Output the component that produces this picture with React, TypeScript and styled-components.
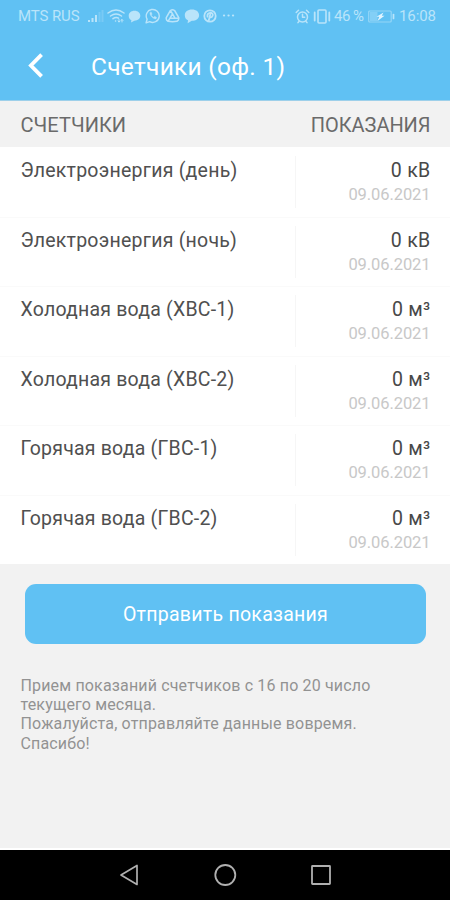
import React from 'react';
import styled, { createGlobalStyle } from 'styled-components';

const Global = createGlobalStyle`
  * { box-sizing: border-box; }
  body { margin: 0; background: #f2f2f2; font-family: Roboto, "Noto Sans", sans-serif; }
`;
const Screen = styled.main`
  width: 450px; height: 900px; display: flex; flex-direction: column;
  background: #f2f2f2; overflow: hidden;
`;
const Header = styled.header`
  height: 101px; flex: none; background: #60c1f3; color: #fff;
  border-bottom: 1px solid #9ed0ea;
`;
const StatusBar = styled.div`
  height: 32px; display: flex; justify-content: space-between; align-items: center;
  padding: 0 14px 0 18px; color: #b9e4fa; font-size: 15px; line-height: 32px;
`;
const StatusGroup = styled.div`display: flex; align-items: center; white-space: pre;`;
const StatusText = styled.span<{ $w: number; $ls?: number; $gap?: number }>`
  width: ${p => p.$w}px; letter-spacing: ${p => p.$ls ?? 0}px; margin-left: ${p => p.$gap ?? 0}px;
`;
const Glyph = styled.svg<{ $gap?: number }>`
  display: block; flex: none; margin-left: ${p => p.$gap ?? 0}px;
  fill: none; stroke: currentColor; stroke-linecap: round; stroke-linejoin: round;
`;
const TitleBar = styled.div`height: 68px; display: flex; align-items: center; padding-left: 26px;`;
const BackButton = styled.button`
  width: 65px; height: 40px; padding: 0; border: 0; background: none; color: #fff;
  display: flex; align-items: center;
`;
const Title = styled.h1`
  margin: 0; font-size: 24.5px; line-height: 32px; font-weight: 400; letter-spacing: .28px; padding-top: 2px;
`;
const TableHead = styled.div`
  height: 46px; flex: none; display: flex; justify-content: space-between; align-items: center;
  padding: 2px 19.5px 0 20.5px; font-size: 20px; color: #6a6a6a;
`;
const HeadLabel = styled.span<{ $ls: number }>`letter-spacing: ${p => p.$ls}px;`;
const Meters = styled.div`flex: none; background: #fff;`;
const Row = styled.div`
  height: 69.5px; display: flex; justify-content: space-between; padding: 9px 19.5px 0 20.5px;
  & + & { box-shadow: inset 0 1px #fafafa; }
`;
const MeterName = styled.div<{ $ls: number }>`
  font-size: 19.5px; line-height: 29px; color: #505050; letter-spacing: ${p => p.$ls}px;
`;
const Reading = styled.div`
  width: 135.5px; height: 52px; border-left: 1px solid #f6f6f6; text-align: right;
`;
const Value = styled.div`font-size: 19.5px; line-height: 29px; color: #484848; letter-spacing: .3px;`;
const DateText = styled.div`font-size: 16.5px; line-height: 20.5px; color: #c8c8c8; letter-spacing: -.08px;`;
const Submit = styled.button`
  flex: none; width: 401px; height: 60px; margin: 20px 0 0 25px; padding: 0; border: 0; border-radius: 11px;
  background: #60c1f3; color: #fff; font: 400 19.5px Roboto, sans-serif; letter-spacing: .27px;
`;
const Note = styled.p`
  margin: 32px 20px 0 20.5px; font-size: 16px; line-height: 19.2px; color: #929292; letter-spacing: .16px;
`;
const NoteLine = styled.span`display: block; white-space: nowrap;`;
const NavBar = styled.nav`
  height: 52px; flex: none; margin-top: auto; background: #000; color: #b0b0b0;
  border-top: 2px solid #fff; display: flex; align-items: center; padding-left: 118px; gap: 73px;
`;

const meters = [
  ['Электроэнергия (день)', '0 кВ', .24],
  ['Электроэнергия (ночь)', '0 кВ', .24],
  ['Холодная вода (ХВС-1)', '0 м³', .21],
  ['Холодная вода (ХВС-2)', '0 м³', .21],
  ['Горячая вода (ГВС-1)', '0 м³', .21],
  ['Горячая вода (ГВС-2)', '0 м³', .21],
] as const;

const StatusIcons = () => (
  <>
    <Glyph width="17" height="14" viewBox="0 0 17 14" strokeWidth="2">
      <path d="M2 13v-2M5.5 13v-4M9 13V6" strokeLinecap="butt" />
      <path d="M12.5 13V3M15.5 13V1" strokeLinecap="butt" opacity=".28" />
    </Glyph>
    <Glyph $gap={3} width="18" height="16" viewBox="0 0 18 16" strokeWidth="1.5">
      <path d="M1 5Q9-1 17 5M3.5 8Q9 4 14.5 8M6 10.7q3-2.2 5.5-.5M8.5 13h.1" />
      <path d="M12 11.5v2.5m-1-1 1 1 1-1M15 14v-2.5m-1 1 1-1 1 1" strokeWidth="1" />
    </Glyph>
    <Glyph $gap={3} width="13" height="13" viewBox="0 0 13 13">
      <path d="M6.5.7C3 .7.7 2.9.7 5.8c0 2 1 3.6 2.7 4.4L3 12.5l3.4-1.8c3.5 0 5.9-2 5.9-4.9S10 .7 6.5.7Z" fill="currentColor" stroke="none" />
    </Glyph>
    <Glyph $gap={4} width="16" height="16" viewBox="0 0 16 16" strokeWidth="1.4">
      <path d="m1.1 14.8 1-3.6a6.5 6.5 0 1 1 2.6 2.5Z" />
      <path d="M5 4.5c-.8 2.5 3 6.7 6 6.4l.6-1.6-2-1-1 .9C7.4 8.7 6.7 8 6.3 7l.8-.8-.8-1.9Z" fill="currentColor" strokeWidth=".4" />
    </Glyph>
    <Glyph $gap={4} width="15" height="14" viewBox="0 0 15 14" strokeWidth="1.5">
      <path d="M5.4 1.5q2.1-1.4 4.2 0l4 6.8q.8 2.5-1.6 4-4.5.9-9 0-2.4-1.5-1.6-4ZM7.5 4.8 5 9.2h5ZM5.4 1.8l2.1 3M13.5 9.2H10M3 12.3l2-3.1" />
    </Glyph>
    <Glyph $gap={4} width="16" height="15" viewBox="0 0 16 15">
      <path d="M8 .5C3.6.5.8 2.8.8 6.2c0 2.6 1.3 4.2 3.2 5.1l-.4 3 4.2-2.5c4.4 0 7.3-2.3 7.3-5.6S12.3.5 8 .5Z" fill="currentColor" stroke="none" />
    </Glyph>
    <Glyph $gap={3} width="14" height="14" viewBox="0 0 14 14" strokeWidth="1.8">
      <circle cx="7" cy="7" r="5.7" />
      <path d="M4.5 7.7C3.4 2.7 10.8 2.6 9.7 6.6c-.7 2.5-3.2 2-3 .3M7.3 5.5 5.6 12" />
    </Glyph>
    <Glyph $gap={5} width="13" height="4" viewBox="0 0 13 4">
      <path d="M2 1.5h.1M6.5 1.5h.1M11 1.5h.1" strokeWidth="2.2" />
    </Glyph>
  </>
);

export default function App() {
  return (
    <Screen>
      <Global />
      <Header>
        <StatusBar>
          <StatusGroup><StatusText $w={69} $ls={-.1}>MTS RUS</StatusText><StatusIcons /></StatusGroup>
          <StatusGroup>
            <Glyph width="15" height="15" viewBox="0 0 15 15" strokeWidth="1.5">
              <circle cx="7.5" cy="8" r="5" /><path d="M7.5 5.3v2.9H9.7M1.2 3.5 3.5 1.2M11.5 1.2l2.3 2.3M4 12.5l-1 1.1M11 12.5l1 1.1" />
            </Glyph>
            <Glyph $gap={3} width="18" height="15" viewBox="0 0 18 15" strokeWidth="1.6">
              <rect x="5" y="1" width="8" height="13" rx="1" /><path d="M1.7 3.5v8M16.3 3.5v8" strokeWidth="1.8" />
            </Glyph>
            <StatusText $gap={3} $w={34} $ls={-.5}>46 %</StatusText>
            <Glyph width="27" height="13" viewBox="0 0 27 13" strokeWidth="1.2">
              <rect x=".7" y="1" width="22.5" height="11" rx="1" opacity=".6" />
              <path d="M2 2h7.5v9H2z" fill="currentColor" stroke="none" opacity=".4" />
              <path d="m15.5 2.5-7 4.2h2.8L9.5 11l7-5.3h-2.7Z" fill="#e0f4ff" stroke="none" />
              <path d="M25.5 4.5v4" strokeWidth="1.7" />
            </Glyph>
            <StatusText $gap={4} $w={37} $ls={-.1}>16:08</StatusText>
          </StatusGroup>
        </StatusBar>
        <TitleBar>
          <BackButton aria-label="Назад">
            <Glyph width="20" height="28" viewBox="0 0 20 28" strokeWidth="3.8">
              <path d="M15.6 2.7 4.9 13.5l10.7 10.8" strokeLinecap="butt" strokeLinejoin="miter" />
            </Glyph>
          </BackButton>
          <Title>Счетчики (оф. 1)</Title>
        </TitleBar>
      </Header>
      <TableHead><HeadLabel $ls={.05}>СЧЕТЧИКИ</HeadLabel><HeadLabel $ls={-.05}>ПОКАЗАНИЯ</HeadLabel></TableHead>
      <Meters>
        {meters.map(([name, value, ls]) => (
          <Row key={name}>
            <MeterName $ls={ls}>{name}</MeterName>
            <Reading><Value>{value}</Value><DateText>09.06.2021</DateText></Reading>
          </Row>
        ))}
      </Meters>
      <Submit>Отправить показания</Submit>
      <Note>
        <NoteLine>Прием показаний счетчиков с 16 по 20 число</NoteLine>
        <NoteLine>текущего месяца.</NoteLine>
        <NoteLine>Пожалуйста, отправляйте данные вовремя.</NoteLine>
        <NoteLine>Спасибо!</NoteLine>
      </Note>
      <NavBar>
        <Glyph width="22" height="24" viewBox="0 0 22 24" strokeWidth="1.7"><path d="M19 2.5v19L3 12Z" /></Glyph>
        <Glyph width="24" height="24" viewBox="0 0 24 24" strokeWidth="1.8"><circle cx="12.3" cy="12" r="10" /></Glyph>
        <Glyph width="24" height="24" viewBox="0 0 24 24" strokeWidth="1.8"><rect x="2" y="3" width="18" height="18" rx=".5" /></Glyph>
      </NavBar>
    </Screen>
  );
}
